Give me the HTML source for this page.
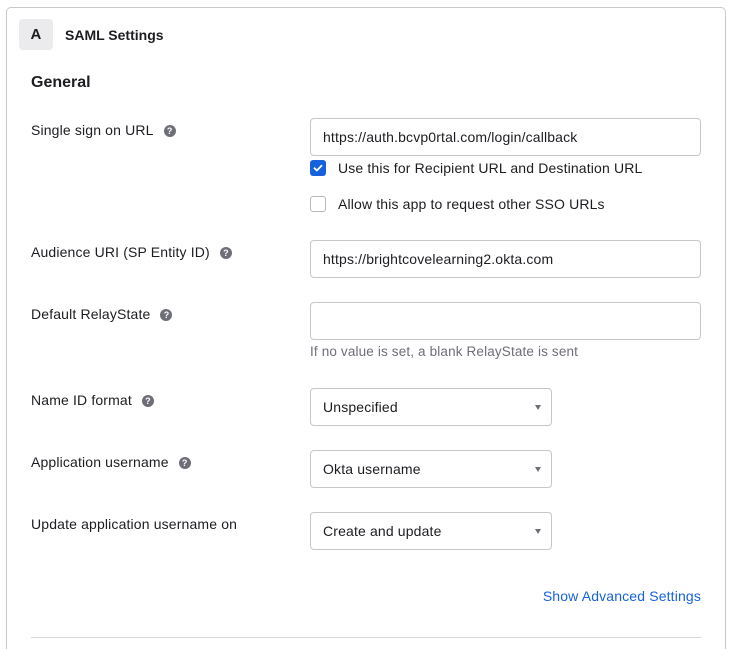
<!DOCTYPE html>
<html style="overflow:hidden;width:729px;height:649px"><head><meta charset="utf-8"><style>
*{margin:0;padding:0;box-sizing:border-box}
html,body{overflow:hidden}
body{width:729px;height:649px;background:#fff;font-family:"Liberation Sans",sans-serif;color:#1d1d21;position:relative;font-size:14px;letter-spacing:0.15px}
.a{position:absolute;white-space:nowrap}
.card{position:absolute;left:6px;top:7px;width:720px;height:660px;border:1.5px solid #c8c8cc;border-bottom:none;border-radius:5px 5px 0 0}
.box{position:absolute;left:19px;top:19px;width:34px;height:31px;background:#ebebed;border-radius:4px;font-weight:bold;font-size:15px;text-align:center;line-height:31px}
.lbl{line-height:16px}
.q{display:inline-block;width:12px;height:12px;border-radius:50%;background:#6e6e78;color:#fff;font-size:9px;font-weight:bold;text-align:center;line-height:12px;margin-left:10px;vertical-align:1px;letter-spacing:0}
.in{position:absolute;left:310px;width:391px;height:38px;border:1px solid #c6c6cb;border-radius:4px;padding-left:12px;line-height:36px}
.sel{position:absolute;left:310px;width:242px;height:38px;border:1px solid #c6c6cb;border-radius:4px;padding-left:12px;line-height:36px}
.sel:after{content:"";position:absolute;right:10px;top:16px;border-left:3.5px solid transparent;border-right:3.5px solid transparent;border-top:5px solid #6e6e78}
.cb{position:absolute;left:310px;width:16px;height:16px;border-radius:3px}
</style></head><body>
<div class="card"></div>
<div class="box">A</div>
<div class="a" style="left:65px;top:27px;font-weight:bold;font-size:14px;letter-spacing:0">SAML Settings</div>
<div class="a" style="left:31px;top:74px;font-weight:bold;font-size:16px;letter-spacing:0">General</div>

<div class="a lbl" style="left:31px;top:122px">Single sign on URL<span class="q">?</span></div>
<div class="in" style="top:118px">https://auth.bcvp0rtal.com/login/callback</div>
<div class="cb" style="top:160px;background:#1662dd"><svg width="16" height="16" viewBox="0 0 16 16"><path d="M4.5 8.2l2.3 2.3 4.7-4.8" fill="none" stroke="#fff" stroke-width="1.8" stroke-linecap="round" stroke-linejoin="round"/></svg></div>
<div class="a" style="left:338px;top:160px;line-height:16px">Use this for Recipient URL and Destination URL</div>
<div class="cb" style="top:196px;border:1.5px solid #b8b8bd"></div>
<div class="a" style="left:338px;top:196px;line-height:16px">Allow this app to request other SSO URLs</div>

<div class="a lbl" style="left:31px;top:244px">Audience URI (SP Entity ID)<span class="q">?</span></div>
<div class="in" style="top:240px">https://brightcovelearning2.okta.com</div>

<div class="a lbl" style="left:31px;top:306px">Default RelayState<span class="q">?</span></div>
<div class="in" style="top:302px"></div>
<div class="a" style="left:310px;top:344px;color:#6e6e78;font-size:13.5px;line-height:16px">If no value is set, a blank RelayState is sent</div>

<div class="a lbl" style="left:31px;top:392px">Name ID format<span class="q">?</span></div>
<div class="sel" style="top:388px">Unspecified</div>

<div class="a lbl" style="left:31px;top:454px">Application username<span class="q">?</span></div>
<div class="sel" style="top:450px">Okta username</div>

<div class="a lbl" style="left:31px;top:516px">Update application username on</div>
<div class="sel" style="top:512px">Create and update</div>

<div class="a" style="right:28px;top:588px;color:#1662dd;line-height:16px">Show Advanced Settings</div>
<div class="a" style="left:31px;top:637px;width:670px;height:1px;background:#d7d7dc"></div>
</body></html>
